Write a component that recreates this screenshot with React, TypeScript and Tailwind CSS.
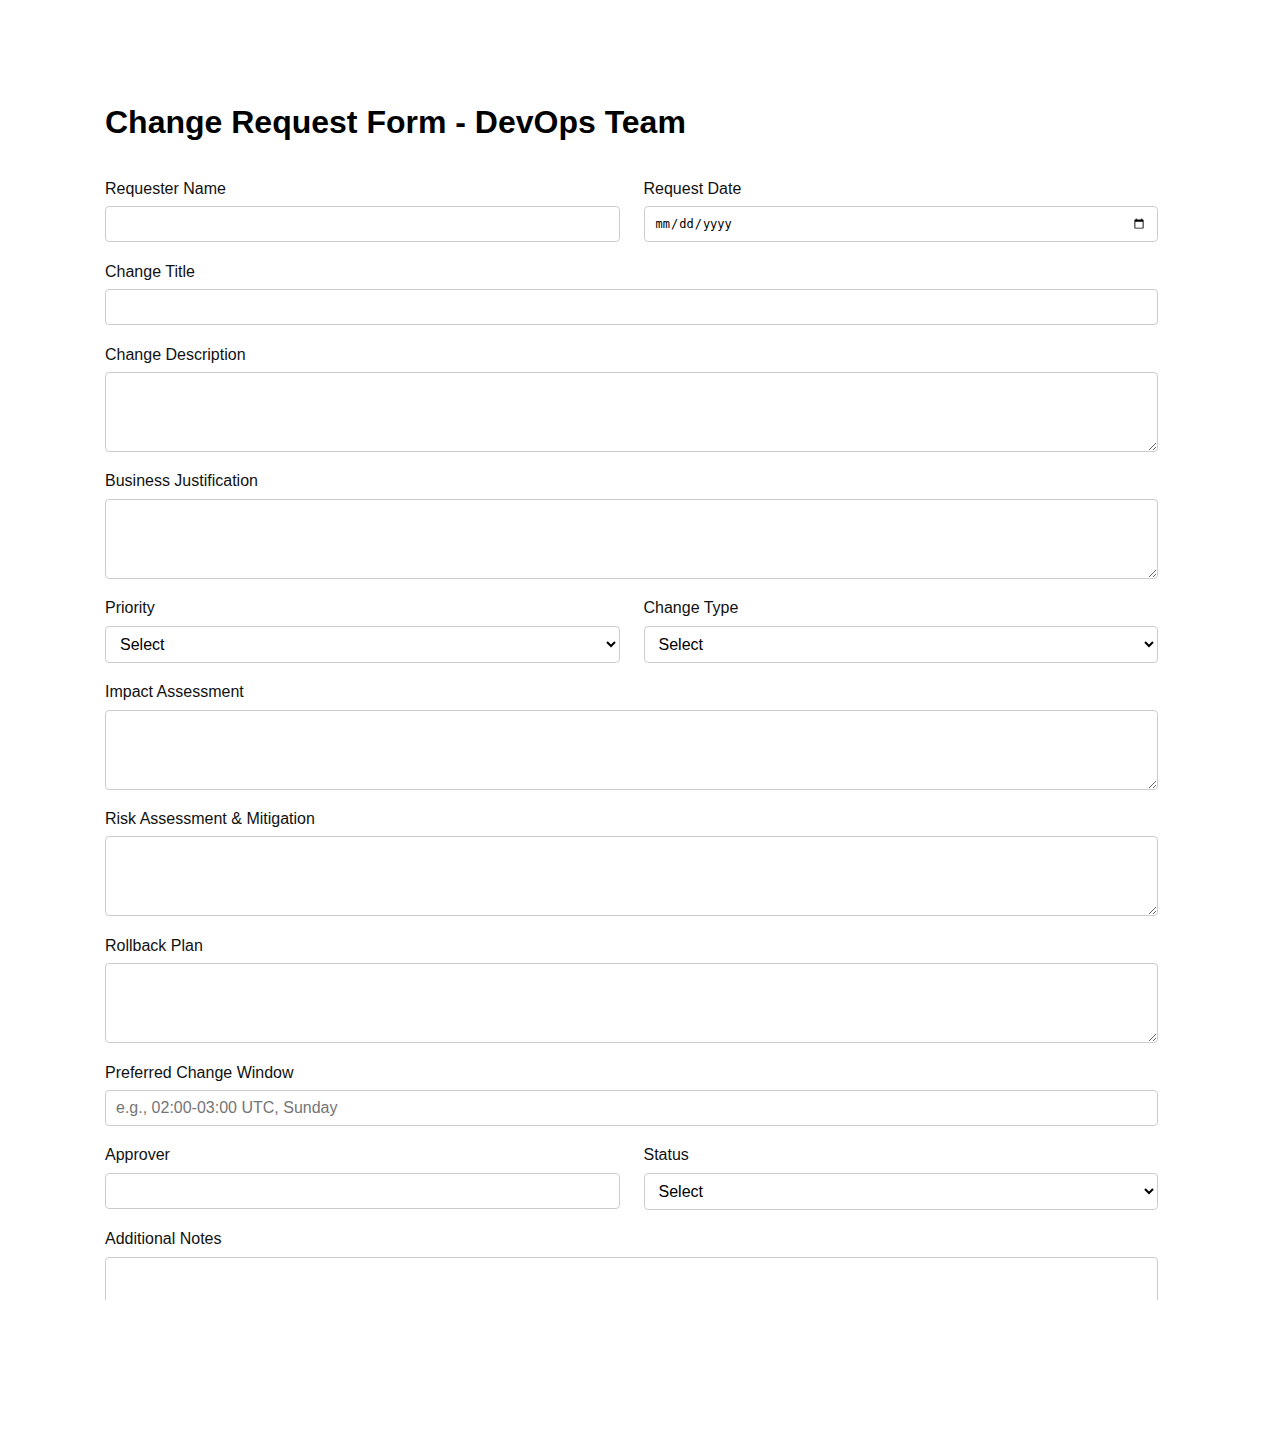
import React from "react";

const inputCls =
  "block w-full h-9 rounded-[4px] border border-[#cccccc] bg-white px-[10px] text-base text-black outline-none placeholder:text-[#757575]";
const areaCls =
  "block w-full h-20 rounded-[4px] border border-[#cccccc] bg-white px-[10px] py-2 text-base text-black outline-none";
const selectCls =
  "block w-full h-[37.2px] rounded-[4px] border border-[#cccccc] bg-white pl-[10px] pr-2 text-base text-black outline-none";
const labelCls = "block mb-2 text-base leading-[18.4px] text-[#111]";

function Field({ label, children }: { label: string; children: React.ReactNode }) {
  return (
    <div className="mb-[20.4px]">
      <label className={labelCls}>{label}</label>
      {children}
    </div>
  );
}

function Choice() {
  return (
    <select className={selectCls} defaultValue="">
      <option value="">Select</option>
    </select>
  );
}

export default function App() {
  return (
    <div
      className="h-[1300px] overflow-hidden bg-white"
      style={{ fontFamily: '"Liberation Sans", Arial, sans-serif' }}
    >
      <form className="mx-auto w-[1053px] pt-[104px]">
        <h1 className="mb-10 text-[32px] leading-[36px] font-bold text-black">
          Change Request Form - DevOps Team
        </h1>

        <div className="grid grid-cols-2 gap-x-6">
          <Field label="Requester Name">
            <input type="text" className={inputCls} />
          </Field>
          <Field label="Request Date">
            <input
              type="date"
              className={inputCls + " text-[12px]"}
              style={{ fontFamily: '"DejaVu Sans Mono", monospace' }}
            />
          </Field>
        </div>

        <Field label="Change Title">
          <input type="text" className={inputCls} />
        </Field>
        <Field label="Change Description">
          <textarea className={areaCls} />
        </Field>
        <Field label="Business Justification">
          <textarea className={areaCls} />
        </Field>

        <div className="grid grid-cols-2 gap-x-6">
          <Field label="Priority">
            <Choice />
          </Field>
          <Field label="Change Type">
            <Choice />
          </Field>
        </div>

        <Field label="Impact Assessment">
          <textarea className={areaCls} />
        </Field>
        <Field label="Risk Assessment & Mitigation">
          <textarea className={areaCls} />
        </Field>
        <Field label="Rollback Plan">
          <textarea className={areaCls} />
        </Field>
        <Field label="Preferred Change Window">
          <input
            type="text"
            className={inputCls}
            placeholder="e.g., 02:00-03:00 UTC, Sunday"
          />
        </Field>

        <div className="grid grid-cols-2 gap-x-6">
          <Field label="Approver">
            <input type="text" className={inputCls} />
          </Field>
          <Field label="Status">
            <Choice />
          </Field>
        </div>

        <Field label="Additional Notes">
          <textarea className={areaCls} />
        </Field>
      </form>
    </div>
  );
}
